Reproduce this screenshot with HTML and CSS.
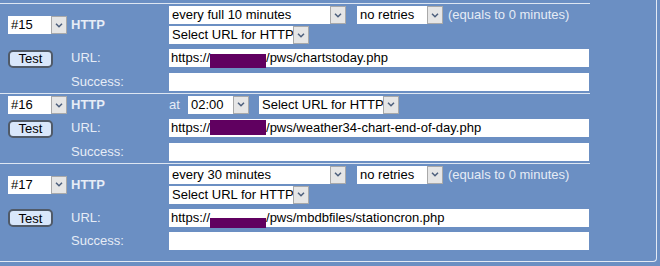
FILE: index.html
```html
<!DOCTYPE html>
<html lang="en">
<head>
    <meta charset="UTF-8">
    <title>HTTP Jobs</title>
    <link rel="stylesheet" href="styles.css">
</head>
<body>
    <div class="panel">
    <table class="jobs">
        <!-- job 15 -->
        <tbody class="job">
            <tr class="head">
                <td class="c-id">
                    <span class="dd"><span class="dd-val w-id">#15</span><span class="dd-btn"><svg width="8" height="5" viewBox="0 0 8 5"><polyline points="1,0.8 4,3.8 7,0.8" /></svg></span></span>
                </td>
                <td class="c-lbl"><b>HTTP</b></td>
                <td class="c-main">
                    <div class="line">
                        <span class="dd"><span class="dd-val w-when">every full 10 minutes</span><span class="dd-btn"><svg width="8" height="5" viewBox="0 0 8 5"><polyline points="1,0.8 4,3.8 7,0.8" /></svg></span></span>
                        <span class="dd gap"><span class="dd-val w-retry">no retries</span><span class="dd-btn"><svg width="8" height="5" viewBox="0 0 8 5"><polyline points="1,0.8 4,3.8 7,0.8" /></svg></span></span>
                        <span class="note">(equals to 0 minutes)</span>
                    </div>
                    <div class="line second">
                        <span class="dd"><span class="dd-val w-url">Select URL for HTTP</span><span class="dd-btn"><svg width="8" height="5" viewBox="0 0 8 5"><polyline points="1,0.8 4,3.8 7,0.8" /></svg></span></span>
                    </div>
                </td>
            </tr>
            <tr>
                <td class="c-id"><button class="test" type="button">Test</button></td>
                <td class="c-lbl">URL:</td>
                <td class="c-main"><div class="field">https://<span class="redact r-a"></span>/pws/chartstoday.php</div></td>
            </tr>
            <tr>
                <td class="c-id"></td>
                <td class="c-lbl">Success:</td>
                <td class="c-main"><div class="field"></div></td>
            </tr>
        </tbody>

        <!-- job 16 -->
        <tbody class="job">
            <tr class="head">
                <td class="c-id">
                    <span class="dd"><span class="dd-val w-id">#16</span><span class="dd-btn"><svg width="8" height="5" viewBox="0 0 8 5"><polyline points="1,0.8 4,3.8 7,0.8" /></svg></span></span>
                </td>
                <td class="c-lbl"><b>HTTP</b></td>
                <td class="c-main">
                    <div class="line">
                        <span class="at">at</span>
                        <span class="dd"><span class="dd-val w-time">02:00</span><span class="dd-btn"><svg width="8" height="5" viewBox="0 0 8 5"><polyline points="1,0.8 4,3.8 7,0.8" /></svg></span></span>
                        <span class="dd gap2"><span class="dd-val w-url">Select URL for HTTP</span><span class="dd-btn"><svg width="8" height="5" viewBox="0 0 8 5"><polyline points="1,0.8 4,3.8 7,0.8" /></svg></span></span>
                    </div>
                </td>
            </tr>
            <tr>
                <td class="c-id"><button class="test" type="button">Test</button></td>
                <td class="c-lbl">URL:</td>
                <td class="c-main"><div class="field">https://<span class="redact r-b"></span>/pws/weather34-chart-end-of-day.php</div></td>
            </tr>
            <tr>
                <td class="c-id"></td>
                <td class="c-lbl">Success:</td>
                <td class="c-main"><div class="field"></div></td>
            </tr>
        </tbody>

        <!-- job 17 -->
        <tbody class="job">
            <tr class="head">
                <td class="c-id">
                    <span class="dd"><span class="dd-val w-id">#17</span><span class="dd-btn"><svg width="8" height="5" viewBox="0 0 8 5"><polyline points="1,0.8 4,3.8 7,0.8" /></svg></span></span>
                </td>
                <td class="c-lbl"><b>HTTP</b></td>
                <td class="c-main">
                    <div class="line">
                        <span class="dd"><span class="dd-val w-when">every 30 minutes</span><span class="dd-btn"><svg width="8" height="5" viewBox="0 0 8 5"><polyline points="1,0.8 4,3.8 7,0.8" /></svg></span></span>
                        <span class="dd gap"><span class="dd-val w-retry">no retries</span><span class="dd-btn"><svg width="8" height="5" viewBox="0 0 8 5"><polyline points="1,0.8 4,3.8 7,0.8" /></svg></span></span>
                        <span class="note">(equals to 0 minutes)</span>
                    </div>
                    <div class="line second">
                        <span class="dd"><span class="dd-val w-url">Select URL for HTTP</span><span class="dd-btn"><svg width="8" height="5" viewBox="0 0 8 5"><polyline points="1,0.8 4,3.8 7,0.8" /></svg></span></span>
                    </div>
                </td>
            </tr>
            <tr>
                <td class="c-id"><button class="test" type="button">Test</button></td>
                <td class="c-lbl">URL:</td>
                <td class="c-main"><div class="field">https://<span class="redact r-c"></span>/pws/mbdbfiles/stationcron.php</div></td>
            </tr>
            <tr>
                <td class="c-id"></td>
                <td class="c-lbl">Success:</td>
                <td class="c-main"><div class="field"></div></td>
            </tr>
        </tbody>
    </table>
    </div>
</body>
</html>
```

FILE: styles.css
```css
body {
    margin: 0;
    background-color: #6b8fc3;
    font-family: "Liberation Sans", Arial, sans-serif;
    font-size: 13px;
    color: #000;
}

.panel {
    width: 656px;
    padding-top: 3px;
    padding-bottom: 9px;
    border-right: 1px solid #e2e9f4;
    border-bottom: 1px solid #e2e9f4;
    border-bottom-right-radius: 4px;
}

.jobs {
    width: 590px;
    border-collapse: collapse;
}

.job {
    border-top: 1px solid #dde6f2;
}

.jobs td {
    padding: 3px 0 2px 0;
    vertical-align: middle;
    line-height: 18px;
}

.jobs tr.head td {
    padding-top: 2px;
    padding-bottom: 2px;
}

.jobs td.c-id {
    width: 61px;
    padding-left: 8px;
}

.jobs td.c-lbl {
    width: 98px;
    padding-left: 2px;
    color: #e6ecf6;
}

.jobs td.c-main {
    width: 421px;
}

/* dropdowns */
.line {
    display: flex;
    align-items: center;
    height: 18px;
}

.line.second {
    margin-top: 2px;
}

.dd {
    display: inline-flex;
    height: 18px;
    vertical-align: middle;
}

.dd-val {
    background-color: #fff;
    padding-left: 3px;
    box-sizing: border-box;
    line-height: 18px;
    white-space: nowrap;
    overflow: hidden;
}

.dd-btn {
    width: 16px;
    height: 18px;
    box-sizing: border-box;
    background-color: #e6e6e6;
    border: 1px solid #a9a9a9;
    display: flex;
    align-items: center;
    justify-content: center;
}

.dd-btn svg polyline {
    fill: none;
    stroke: #4d5f7c;
    stroke-width: 1.5;
}

.w-id { width: 43px; }
.w-when { width: 161px; }
.w-retry { width: 70px; }
.w-url { width: 124px; }
.w-time { width: 45px; }

.gap { margin-left: 11px; }
.gap2 { margin-left: 10px; }

.note {
    margin-left: 5px;
    color: #e6ecf6;
}

.at {
    color: #e6ecf6;
    width: 19px;
}

/* inputs */
.field {
    width: 420px;
    height: 18px;
    background-color: #fff;
    padding-left: 2px;
    box-sizing: border-box;
    line-height: 18px;
    white-space: nowrap;
}

.redact {
    display: inline-block;
    width: 56px;
    background-color: #600060;
}

.r-a { height: 14px; vertical-align: -6px; }
.r-b { height: 15px; vertical-align: -3px; }
.r-c { height: 10px; vertical-align: -6px; }

.test {
    width: 45px;
    height: 18px;
    padding: 0;
    box-sizing: border-box;
    border: 2px solid #505a68;
    border-radius: 5px;
    background-color: #d9e7fb;
    font-family: "Liberation Sans", Arial, sans-serif;
    font-size: 13px;
    line-height: 13px;
    color: #000;
    vertical-align: middle;
}
```
